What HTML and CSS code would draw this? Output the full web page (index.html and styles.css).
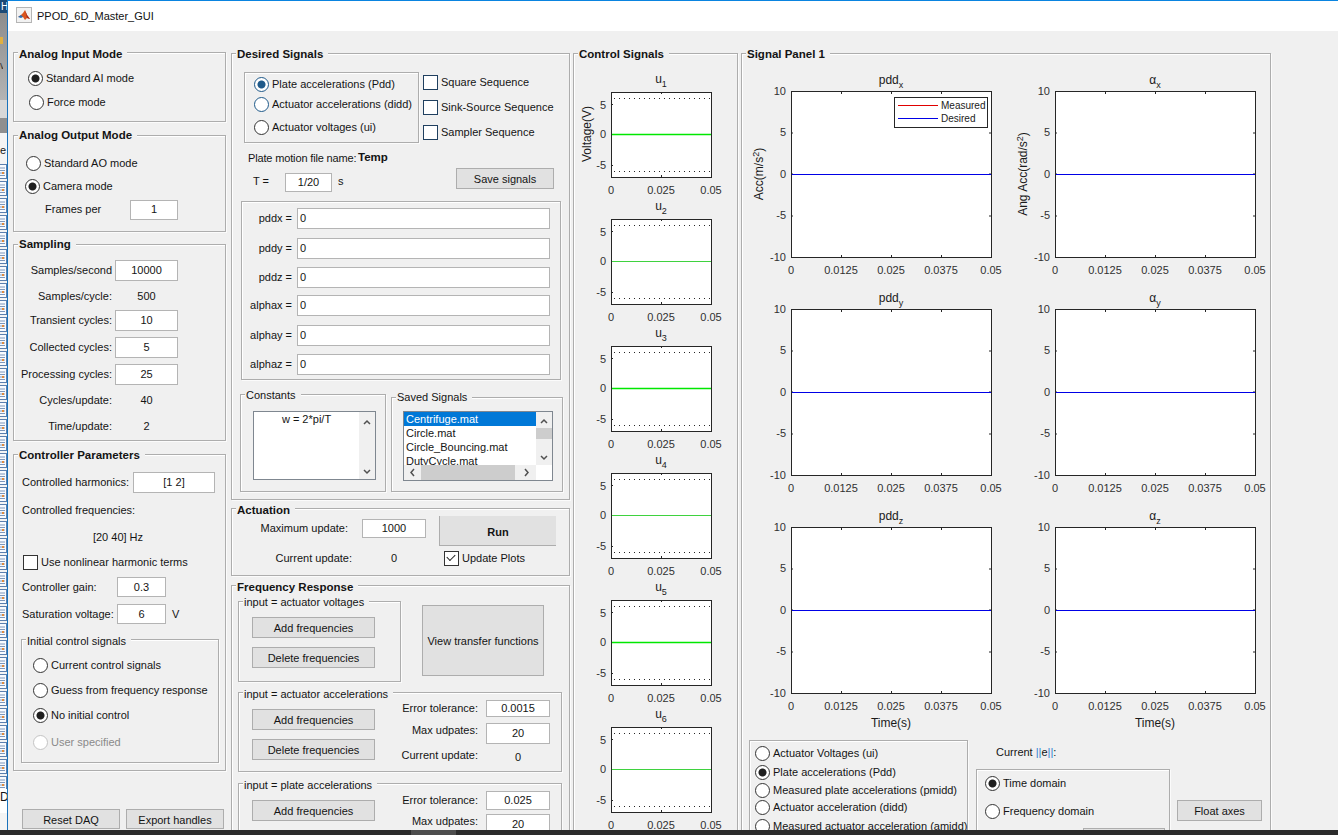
FILE: index.html
```html
<!DOCTYPE html>
<html lang="en">
<head>
<meta charset="utf-8">
<title>PPOD_6D_Master_GUI</title>
<link rel="stylesheet" href="styles.css">
</head>
<body>
<svg class="defs" width="0" height="0" aria-hidden="true">
  <defs>
    <pattern id="docs" width="8" height="17" patternUnits="userSpaceOnUse">
      <rect x="-3" y="1.500" width="9.500" height="14" fill="#f8fbff" stroke="#5b7fae"/>
      <path d="M-1 5h6M-1 7.500h6M-1 10h6M-1 12.500h6" stroke="#7d97bb"/>
      <path d="M2 9h2v2h-2z" fill="#e08a3c"/>
    </pattern>
    <g id="ctl">
      <rect x="37.500" y="23.500" width="100" height="85" fill="#fff" stroke="#262626"/>
      <path d="M87.500 23v2M87.500 108v-2M37 35.500h2M37 65.500h2M37 96.500h2" stroke="#262626"/>
      <path d="M40 29.500H136M40 102.500H136" stroke="#262626" stroke-dasharray="1 4"/>
    </g>
    <g id="sig">
      <rect x="49.500" y="22.500" width="200" height="166" fill="#fff" stroke="#262626"/>
      <path d="M99.500 23v2M149.500 23v2M199.500 23v2M99.500 188v-2M149.500 188v-2M199.500 188v-2M49 64h2M49 105h2M49 147h2M249 64h-2M249 105h-2M249 147h-2" stroke="#262626"/>
      <path d="M50 105.500H249" stroke="#0000e6"/>
    </g>
    <g id="sig-x">
      <text x="49" y="205" text-anchor="middle">0</text>
      <text x="99" y="205" text-anchor="middle">0.0125</text>
      <text x="149" y="205" text-anchor="middle">0.025</text>
      <text x="199" y="205" text-anchor="middle">0.0375</text>
      <text x="249" y="205" text-anchor="middle">0.05</text>
    </g>
    <g id="sig-y">
      <text x="44" y="26" text-anchor="end">10</text>
      <text x="44" y="67" text-anchor="end">5</text>
      <text x="44" y="109" text-anchor="end">0</text>
      <text x="44" y="150" text-anchor="end">-5</text>
      <text x="44" y="192" text-anchor="end">-10</text>
    </g>
  </defs>
</svg>

<div class="screen">
  <aside class="strip">
    <div class="strip-top">H</div>
    <div class="strip-grey"><span class="strip-folder"></span><span class="strip-v">v</span></div>
    <div class="strip-pale"><span class="strip-arrow"></span></div>
    <div class="strip-e">e</div>
    <svg class="strip-docs" width="7" height="630"><rect width="7" height="630" fill="url(#docs)"/></svg>
    <div class="strip-d">D</div>
  </aside>

  <main class="window">
    <header class="titlebar">
      <svg class="app-icon" width="16" height="16" viewBox="0 0 16 16">
        <rect x=".5" y=".5" width="15" height="15" fill="#f2f2f2" stroke="#b5b5b5"/>
        <path d="M2 10l3-2 2-2 2-3 2 5 3 4-3-1-2 2-2-3z" fill="#d9541e"/>
        <path d="M2 10l3-2 2 2-2 1z" fill="#2a6fb5"/>
        <path d="M9 3l2 5 3 4-3-1z" fill="#a8281a"/>
      </svg>
      <span class="title-text">PPOD_6D_Master_GUI</span>
    </header>

    <div class="client">
      <!-- Column 1 -->
      <section class="col col-1">
        <div class="panel p-ai">
          <h2 class="ptitle t2">Analog Input Mode</h2>
          <div class="radio on">Standard AI mode</div>
          <div class="radio nudge-r">Force mode</div>
        </div>

        <div class="panel p-ao">
          <h2 class="ptitle">Analog Output Mode</h2>
          <div class="radio">Standard AO mode</div>
          <div class="radio nudge-l on">Camera mode</div>
          <div class="frames-row"><span class="frames-label">Frames per</span><span class="input w48">1</span></div>
        </div>

        <div class="panel p-sampling">
          <h2 class="ptitle">Sampling</h2>
          <span class="lab">Samples/second</span><span class="input">10000</span>
          <span class="lab">Samples/cycle:</span><span class="val">500</span>
          <span class="lab">Transient cycles:</span><span class="input">10</span>
          <span class="lab">Collected cycles:</span><span class="input">5</span>
          <span class="lab">Processing cycles:</span><span class="input">25</span>
          <span class="lab">Cycles/update:</span><span class="val">40</span>
          <span class="lab">Time/update:</span><span class="val">2</span>
        </div>

        <div class="panel p-ctrl">
          <h2 class="ptitle t1">Controller Parameters</h2>
          <div class="ctrl-rows">
            <div class="ctrl-row"><span class="harm-label">Controlled harmonics:</span><span class="input w82">[1 2]</span></div>
            <div class="ctrl-row">Controlled frequencies:</div>
            <div class="ctrl-row ctrl-center">[20 40] Hz</div>
            <div class="ctrl-row"><span class="check">Use nonlinear harmonic terms</span></div>
            <div class="ctrl-row"><span class="gain-label">Controller gain:</span><span class="input w49">0.3</span></div>
            <div class="ctrl-row"><span class="gain-label">Saturation voltage:</span><span class="input w49">6</span><span class="unit">V</span></div>
          </div>
          <div class="panel p-init">
            <h3 class="ptitle sub t2">Initial control signals</h3>
            <div class="radio">Current control signals</div>
            <div class="radio">Guess from frequency response</div>
            <div class="radio on">No initial control</div>
            <div class="radio off">User specified</div>
          </div>
        </div>

        <div class="foot-buttons">
          <button class="btn w98">Reset DAQ</button>
          <button class="btn w98">Export handles</button>
        </div>
      </section>

      <!-- Column 2 -->
      <section class="col col-2">
        <div class="panel p-desired">
          <h2 class="ptitle t1">Desired Signals</h2>
          <div class="modes">
            <div class="panel mode-box">
              <div class="radio on blue">Plate accelerations (Pdd)</div>
              <div class="radio blue">Actuator accelerations (didd)</div>
              <div class="radio">Actuator voltages (ui)</div>
            </div>
            <div class="seq-list">
              <span class="check blue">Square Sequence</span>
              <span class="check blue">Sink-Source Sequence</span>
              <span class="check blue">Sampler Sequence</span>
            </div>
          </div>
          <div class="file-row"><span class="file-label">Plate motion file name:</span><span class="file-name">Temp</span></div>
          <div class="t-row">
            <span class="t-label">T =</span><span class="input t-input">1/20</span><span class="t-unit">s</span>
            <button class="btn save">Save signals</button>
          </div>
          <div class="panel eq-box">
            <span class="lab">pddx =</span><span class="input left">0</span>
            <span class="lab">pddy =</span><span class="input left">0</span>
            <span class="lab">pddz =</span><span class="input left">0</span>
            <span class="lab">alphax =</span><span class="input left">0</span>
            <span class="lab">alphay =</span><span class="input left">0</span>
            <span class="lab">alphaz =</span><span class="input left">0</span>
          </div>
          <div class="const-row">
            <div class="panel p-const">
              <h3 class="ptitle sub t1">Constants</h3>
              <div class="listbox const-list">
                <div class="const-text">w = 2*pi/T</div>
                <div class="vscroll">
                  <svg width="16" height="67" viewBox="0 0 16 67"><path d="M5 12l3-3 3 3M5 58l3 3 3-3" fill="none" stroke="#505050" stroke-width="1.500"/></svg>
                </div>
              </div>
            </div>
            <div class="panel p-saved">
              <h3 class="ptitle sub">Saved Signals</h3>
              <div class="listbox saved-list">
                <div class="saved-items">
                  <div class="item selected">Centrifuge.mat</div>
                  <div class="item">Circle.mat</div>
                  <div class="item">Circle_Bouncing.mat</div>
                  <div class="item">DutyCycle.mat</div>
                </div>
                <div class="vscroll saved-v">
                  <svg width="16" height="53" viewBox="0 0 16 53"><rect y="16" width="16" height="11" fill="#cdcdcd"/><path d="M5 11l3-3 3 3M5 44l3 3 3-3" fill="none" stroke="#505050" stroke-width="1.500"/></svg>
                </div>
                <div class="hscroll">
                  <svg width="132" height="15" viewBox="0 0 132 15"><rect x="17" width="94" height="15" fill="#cdcdcd"/><path d="M10 4l-3 3.500 3 3.500M121 4l3 3.500-3 3.500" fill="none" stroke="#505050" stroke-width="1.500"/></svg>
                </div>
              </div>
            </div>
          </div>
        </div>

        <div class="panel p-act">
          <h2 class="ptitle t2">Actuation</h2>
          <div class="act-row1">
            <span class="act-label">Maximum update:</span>
            <span class="input act-input">1000</span>
            <button class="btn run">Run</button>
          </div>
          <div class="act-row2">
            <span class="act-cur">Current update:</span>
            <span class="act-val">0</span>
            <span class="check checked">Update Plots</span>
          </div>
        </div>

        <div class="panel p-freq">
          <h2 class="ptitle t2">Frequency Response</h2>
          <div class="freq-top">
            <div class="panel f-volt">
              <h3 class="ptitle sub t1">input = actuator voltages</h3>
              <div class="f-buttons">
                <button class="btn wf">Add frequencies</button>
                <button class="btn wf">Delete frequencies</button>
              </div>
            </div>
            <button class="btn view">View transfer functions</button>
          </div>
          <div class="panel f-accel">
            <h3 class="ptitle sub t2">input = actuator accelerations</h3>
            <div class="f-buttons f-offset">
              <button class="btn wf">Add frequencies</button>
              <button class="btn wf">Delete frequencies</button>
            </div>
            <div class="tol-grid">
              <span class="lab tol-h17">Error tolerance:</span><span class="input tol-h17">0.0015</span>
              <span class="lab tol-up">Max udpates:</span><span class="input">20</span>
              <span class="lab tol-up">Current update:</span><span class="val tol-val">0</span>
            </div>
          </div>
          <div class="panel f-plate">
            <h3 class="ptitle sub t2">input = plate accelerations</h3>
            <div class="f-buttons f-offset">
              <button class="btn wf">Add frequencies</button>
            </div>
            <div class="tol-grid tol-plate">
              <span class="lab tol-h19">Error tolerance:</span><span class="input tol-h19">0.025</span>
              <span class="lab tol-up">Max udpates:</span><span class="input">20</span>
            </div>
          </div>
        </div>
      </section>

      <!-- Column 3 -->
      <section class="col col-3">
        <div class="panel p-control">
          <h2 class="ptitle t1">Control Signals</h2>
          <svg class="plot-c" viewBox="0 0 163 127">
            <use href="#ctl"/><path class="ctl-line bright" d="M38 65.500H137"/>
            <text class="plot-title" x="87" y="14" text-anchor="middle">u<tspan class="sub-t" dy="4">1</tspan></text>
            <text x="32" y="40" text-anchor="end">5</text><text x="32" y="69" text-anchor="end">0</text><text x="32" y="100" text-anchor="end">-5</text>
            <text x="37" y="125" text-anchor="middle">0</text><text x="87" y="125" text-anchor="middle">0.025</text><text x="137" y="125" text-anchor="middle">0.05</text>
            <text class="ylab" transform="translate(17 65) rotate(-90)" text-anchor="middle">Voltage(V)</text>
          </svg>
          <svg class="plot-c" viewBox="0 0 163 127">
            <use href="#ctl"/><path class="ctl-line" d="M38 65.500H137"/>
            <text class="plot-title" x="87" y="14" text-anchor="middle">u<tspan class="sub-t" dy="4">2</tspan></text>
            <text x="32" y="40" text-anchor="end">5</text><text x="32" y="69" text-anchor="end">0</text><text x="32" y="100" text-anchor="end">-5</text>
            <text x="37" y="125" text-anchor="middle">0</text><text x="87" y="125" text-anchor="middle">0.025</text><text x="137" y="125" text-anchor="middle">0.05</text>
          </svg>
          <svg class="plot-c" viewBox="0 0 163 127">
            <use href="#ctl"/><path class="ctl-line bright" d="M38 65.500H137"/>
            <text class="plot-title" x="87" y="14" text-anchor="middle">u<tspan class="sub-t" dy="4">3</tspan></text>
            <text x="32" y="40" text-anchor="end">5</text><text x="32" y="69" text-anchor="end">0</text><text x="32" y="100" text-anchor="end">-5</text>
            <text x="37" y="125" text-anchor="middle">0</text><text x="87" y="125" text-anchor="middle">0.025</text><text x="137" y="125" text-anchor="middle">0.05</text>
          </svg>
          <svg class="plot-c" viewBox="0 0 163 127">
            <use href="#ctl"/><path class="ctl-line" d="M38 65.500H137"/>
            <text class="plot-title" x="87" y="14" text-anchor="middle">u<tspan class="sub-t" dy="4">4</tspan></text>
            <text x="32" y="40" text-anchor="end">5</text><text x="32" y="69" text-anchor="end">0</text><text x="32" y="100" text-anchor="end">-5</text>
            <text x="37" y="125" text-anchor="middle">0</text><text x="87" y="125" text-anchor="middle">0.025</text><text x="137" y="125" text-anchor="middle">0.05</text>
          </svg>
          <svg class="plot-c" viewBox="0 0 163 127">
            <use href="#ctl"/><path class="ctl-line bright" d="M38 65.500H137"/>
            <text class="plot-title" x="87" y="14" text-anchor="middle">u<tspan class="sub-t" dy="4">5</tspan></text>
            <text x="32" y="40" text-anchor="end">5</text><text x="32" y="69" text-anchor="end">0</text><text x="32" y="100" text-anchor="end">-5</text>
            <text x="37" y="125" text-anchor="middle">0</text><text x="87" y="125" text-anchor="middle">0.025</text><text x="137" y="125" text-anchor="middle">0.05</text>
          </svg>
          <svg class="plot-c" viewBox="0 0 163 127">
            <use href="#ctl"/><path class="ctl-line" d="M38 65.500H137"/>
            <text class="plot-title" x="87" y="14" text-anchor="middle">u<tspan class="sub-t" dy="4">6</tspan></text>
            <text x="32" y="40" text-anchor="end">5</text><text x="32" y="69" text-anchor="end">0</text><text x="32" y="100" text-anchor="end">-5</text>
            <text x="37" y="125" text-anchor="middle">0</text><text x="87" y="125" text-anchor="middle">0.025</text><text x="137" y="125" text-anchor="middle">0.05</text>
          </svg>
        </div>
      </section>

      <!-- Column 4 -->
      <section class="col col-4">
        <div class="panel p-signal">
          <h2 class="ptitle t1">Signal Panel 1</h2>
          <div class="plot-grid">
            <svg class="plot-s" viewBox="0 0 264 218">
              <use href="#sig"/><use href="#sig-x"/><use href="#sig-y"/>
              <text class="plot-title" x="149" y="15" text-anchor="middle">pdd<tspan class="sub-t" dy="4">x</tspan></text>
              <text class="ylab" transform="translate(21 105) rotate(-90)" text-anchor="middle">Acc(m/s<tspan class="sup-t" dy="-4">2</tspan><tspan dy="4">)</tspan></text>
              <rect x="152.500" y="28.500" width="93" height="30" fill="#fff" stroke="#262626"/>
              <path class="leg-red" d="M156 36.500h40"/><path class="leg-blue" d="M156 49.500h40"/>
              <text class="legend" x="199" y="40">Measured</text><text class="legend" x="199" y="53">Desired</text>
            </svg>
            <svg class="plot-s" viewBox="0 0 264 218">
              <use href="#sig"/><use href="#sig-x"/><use href="#sig-y"/>
              <text class="plot-title" x="149" y="15" text-anchor="middle">&#945;<tspan class="sub-t" dy="4">x</tspan></text>
              <text class="ylab" transform="translate(21 105) rotate(-90)" text-anchor="middle">Ang Acc(rad/s<tspan class="sup-t" dy="-4">2</tspan><tspan dy="4">)</tspan></text>
            </svg>
            <svg class="plot-s" viewBox="0 0 264 218">
              <use href="#sig"/><use href="#sig-x"/><use href="#sig-y"/>
              <text class="plot-title" x="149" y="15" text-anchor="middle">pdd<tspan class="sub-t" dy="4">y</tspan></text>
            </svg>
            <svg class="plot-s" viewBox="0 0 264 218">
              <use href="#sig"/><use href="#sig-x"/><use href="#sig-y"/>
              <text class="plot-title" x="149" y="15" text-anchor="middle">&#945;<tspan class="sub-t" dy="4">y</tspan></text>
            </svg>
            <svg class="plot-s" viewBox="0 0 264 218">
              <use href="#sig"/><use href="#sig-x"/><use href="#sig-y"/>
              <text class="plot-title" x="149" y="15" text-anchor="middle">pdd<tspan class="sub-t" dy="4">z</tspan></text>
              <text class="ylab" x="149" y="222" text-anchor="middle">Time(s)</text>
            </svg>
            <svg class="plot-s" viewBox="0 0 264 218">
              <use href="#sig"/><use href="#sig-x"/><use href="#sig-y"/>
              <text class="plot-title" x="149" y="15" text-anchor="middle">&#945;<tspan class="sub-t" dy="4">z</tspan></text>
              <text class="ylab" x="149" y="222" text-anchor="middle">Time(s)</text>
            </svg>
          </div>
          <div class="sig-bottom">
            <div class="panel view-box">
              <div class="radio">Actuator Voltages (ui)</div>
              <div class="radio on">Plate accelerations (Pdd)</div>
              <div class="radio">Measured plate accelerations (pmidd)</div>
              <div class="radio">Actuator acceleration (didd)</div>
              <div class="radio">Measured actuator acceleration (amidd)</div>
            </div>
            <div class="domain-col">
              <div class="current-e">Current <span class="bars">||</span>e<span class="bars">||</span>:</div>
              <div class="panel domain-box">
                <div class="radio on">Time domain</div>
                <div class="radio">Frequency domain</div>
                <div class="btn domain-btn"></div>
              </div>
            </div>
            <button class="btn float">Float axes</button>
          </div>
        </div>
      </section>
    </div>
  </main>
</div>
<footer class="taskbar"><span class="task-active"></span></footer>
</body>
</html>
```

FILE: styles.css
```css
* { box-sizing: border-box; }
html, body { margin: 0; padding: 0; }
body {
  width: 1338px;
  height: 835px;
  overflow: hidden;
  background: #f0f0f0;
  color: #141414;
  font: 11px/1 "Liberation Sans", Arial, sans-serif;
  white-space: nowrap;
}
.defs { position: absolute; }

.screen { display: flex; height: 830px; overflow: hidden; }

/* left desktop strip */
.strip { width: 7px; flex: none; background: #f4f4f4; overflow: hidden; display: flex; flex-direction: column; }
.strip-top { height: 13px; background: #1c4a76; color: #fff; font-size: 10px; padding: 2px 0 0 1px; line-height: 10px; }
.strip-grey { height: 87px; background: linear-gradient(#8c8c8c, #b4b4b4); display: flex; flex-direction: column; }
.strip-folder { width: 3px; height: 7px; background: #e0b040; margin-top: 24px; }
.strip-v { color: #333; margin-top: 17px; font-size: 10px; width: 3px; overflow: hidden; }
.strip-pale { height: 33px; background: #d8d8d8; }
.strip-arrow { display: block; width: 7px; height: 15px; margin-top: 18px; background: #8f8f8f; }
.strip-e { height: 30px; background: #f4f4f4; font-size: 11px; line-height: 34px; }
.strip-docs { display: block; flex: none; }
.strip-d { font-size: 12px; line-height: 16px; margin-top: -4px; background: #fff; height: 24px; }

/* window */
.window { flex: 1; min-width: 0; border-left: 1px solid #1a72bb; border-top: 1px solid #0a84e0; display: flex; flex-direction: column; }
.titlebar { height: 30px; flex: none; background: #fff; display: flex; align-items: center; padding-left: 8px; }
.app-icon { flex: none; margin-top: -2px; }
.title-text { margin-left: 5px; font-size: 11px; color: #111; }

.client { flex: 1; min-height: 0; display: flex; padding: 22px 0 0 5px; overflow: hidden; }
.col { flex: none; display: flex; flex-direction: column; }
.col-1 { width: 213px; margin: -1px 5px 0 0; }
.col-2 { width: 339px; margin-right: 3px; }
.col-3 { width: 165px; margin-right: 3px; }
.col-4 { width: 530px; }

/* panels */
.panel {
  position: relative;
  flex: none;
  border: 1px solid #adadad;
  box-shadow: inset 1px 1px 0 #fff, 1px 1px 0 #fbfbfb;
}
.ptitle {
  position: absolute;
  top: -7px;
  left: 4px;
  margin: 0;
  padding: 0 5px 0 1px;
  background: #f0f0f0;
  font-size: 11.500px;
  font-weight: 700;
  line-height: 13px;
}
.ptitle.t1 { top: -6px; }
.ptitle.t2 { top: -5px; }
.ptitle.sub { font-weight: 400; font-size: 11px; }

/* generic controls */
.radio { display: flex; align-items: center; gap: 3px; }
.radio::before {
  content: "";
  flex: none;
  width: 13px;
  height: 13px;
  border: 1px solid #333;
  border-radius: 50%;
  background: #fff;
}
.radio.on::before { background: radial-gradient(circle, #1f1f1f 0 3.500px, #fff 4.500px); }
.radio.blue::before { border-color: #1f5a8a; }
.radio.on.blue::before { background: radial-gradient(circle, #1f5a8a 0 3.500px, #fff 4.500px); }
.radio.off { color: #8a8a8a; }
.radio.off::before { border-color: #c4c4c4; }
.nudge-l { margin-left: -1px; }
.nudge-r { margin-left: 1px; }

.check { display: flex; align-items: center; gap: 3px; }
.check::before {
  content: "";
  flex: none;
  width: 13px;
  height: 13px;
  border: 1px solid #333;
  background: #fff;
}
.check.blue::before { border-color: #1f3f5f; }
.check.checked { position: relative; }
.check.checked::after {
  content: "";
  position: absolute;
  left: 3px;
  top: 50%;
  width: 7px;
  height: 4px;
  margin-top: -4px;
  border-left: 1.500px solid #222;
  border-bottom: 1.500px solid #222;
  transform: rotate(-45deg);
}

.input {
  display: flex;
  align-items: center;
  justify-content: center;
  background: #fff;
  border: 1px solid #b4b4b4;
  height: 21px;
}
.input.left { justify-content: flex-start; padding-left: 2px; }
.lab { text-align: right; line-height: 21px; }
.val { text-align: center; line-height: 21px; }
.w48 { width: 48px; height: 20px; }
.w49 { width: 49px; height: 20px; }
.w82 { width: 82px; }
.btn {
  display: block;
  margin: 0;
  padding: 2px 0 0;
  background: #e1e1e1;
  border: 1px solid #adadad;
  font: inherit;
  color: #141414;
}
.w98 { width: 98px; height: 20px; }
.wf { width: 123px; height: 21px; }

/* column 1 */
.p-ai { height: 70px; padding: 13px 0 0 14px; display: grid; grid-template-rows: 24px 24px; }
.p-ao { height: 97px; margin-top: 13px; padding: 16px 0 0 12px; display: grid; grid-template-rows: 23px 23px 23px; }
.frames-row { display: flex; align-items: center; }
.frames-label { width: 104px; padding-left: 19px; }

.p-sampling {
  height: 197px;
  margin-top: 12px;
  padding-top: 15px;
  display: grid;
  grid-template-columns: 98px 63px;
  column-gap: 3px;
  grid-template-rows: 26px 24px 27px 27px 26px 26px 21px;
  align-items: start;
}
.p-ctrl { height: 317px; margin-top: 13px; padding-top: 17px; }
.ctrl-rows {
  padding-left: 8px;
  height: 167px;
  display: grid;
  grid-template-rows: 28px 27px 25px 25px 27px 20px;
}
.ctrl-row { display: flex; align-items: flex-start; line-height: 21px; }
.ctrl-center { width: 192px; justify-content: center; }
.ctrl-row .check { height: 21px; margin-left: 1px; }
.harm-label { width: 111px; }
.gain-label { width: 95px; }
.unit { margin-left: 6px; }
.p-init {
  margin-left: 7px;
  width: 198px;
  height: 124px;
  padding: 13px 0 0 11px;
  display: grid;
  grid-template-rows: 25px 25px 27px 25px;
  align-items: start;
}
.p-init .radio { height: 25px; }
.foot-buttons { display: flex; gap: 6px; margin: 38px 0 0 9px; }

/* column 2 */
.p-desired { height: 447px; padding-top: 18px; }
.modes { display: flex; padding-left: 12px; }
.mode-box {
  width: 175px;
  height: 71px;
  padding: 1px 0 0 9px;
  display: grid;
  grid-template-rows: 20px 23px 20px;
  align-items: start;
}
.mode-box .radio { height: 20px; }
.seq-list { margin-left: 4px; display: flex; flex-direction: column; gap: 5px; }
.seq-list .check { height: 20px; }
.file-row { height: 20px; margin-top: 5px; padding-left: 16px; display: flex; align-items: center; }
.file-label { width: 110px; letter-spacing: -.15px; }
.file-name { font-weight: 700; font-size: 11.500px; }
.t-row { height: 25px; padding: 0 15px 0 21px; display: flex; align-items: flex-start; }
.t-label, .t-unit, .t-input { margin-top: 5px; height: 19px; line-height: 17px; }
.t-label { width: 32px; }
.t-input { width: 47px; }
.t-unit { margin-left: 6px; }
.save { margin-left: auto; width: 98px; height: 21px; }
.eq-box {
  margin: 8px 0 0 9px;
  width: 320px;
  height: 179px;
  padding-top: 6px;
  display: grid;
  grid-template-columns: 50px 253px;
  column-gap: 5px;
  grid-template-rows: 30px 29px 28px 30px 29px 21px;
  align-items: start;
}
.const-row { display: flex; align-items: flex-start; gap: 5px; margin: 14px 0 0 8px; }
.p-const { width: 146px; height: 98px; padding: 16px 0 0 12px; }
.p-saved { width: 172px; height: 95px; margin-top: 3px; padding: 13px 0 0 11px; }
.listbox { border: 1px solid #7f8790; background: #fff; }
.const-list { width: 123px; height: 69px; display: flex; }
.const-text { flex: 1; text-align: center; padding-top: 1px; line-height: 13px; }
.vscroll { background: #f0f0f0; flex: none; }
.vscroll svg, .hscroll svg { display: block; }
.saved-list {
  width: 150px;
  height: 70px;
  display: grid;
  grid-template-columns: 132px 16px;
  grid-template-rows: 53px 15px;
}
.saved-items { overflow: hidden; grid-column: 1; grid-row: 1; }
.item { height: 14px; line-height: 14px; padding-left: 2px; }
.item.selected { background: #0078d7; color: #fff; }
.saved-v { grid-column: 2; grid-row: 1; }
.hscroll { background: #f0f0f0; grid-column: 1; grid-row: 2; }

.p-act { height: 68px; margin-top: 8px; padding-top: 7px; }
.act-row1 { display: flex; height: 32px; align-items: flex-start; }
.act-label { width: 116px; margin-top: 3px; text-align: right; line-height: 19px; }
.act-input { width: 64px; height: 19px; margin: 3px 0 0 14px; }
.run {
  width: 117px;
  height: 30px;
  margin-left: 13px;
  padding-top: 4px;
  border-width: 0 0 1px 1px;
  font-weight: 700;
}
.act-row2 { display: flex; height: 20px; align-items: center; }
.act-cur { width: 120px; text-align: right; }
.act-val { width: 84px; text-align: center; }
.act-row2 .check { margin-left: 8px; }

.p-freq { height: 300px; margin-top: 9px; padding-top: 15px; }
.freq-top { display: flex; align-items: flex-start; margin-left: 6px; }
.f-volt { width: 163px; height: 81px; padding: 15px 0 0 13px; }
.f-buttons { display: flex; flex-direction: column; gap: 9px; flex: none; }
.view { width: 122px; height: 71px; margin: 4px 0 0 21px; }
.f-accel, .f-plate {
  width: 324px;
  height: 80px;
  margin-left: 6px;
  padding: 7px 0 0 13px;
  display: flex;
  align-items: flex-start;
}
.f-accel { margin-top: 10px; }
.f-plate { margin-top: 11px; }
.f-offset { margin-top: 9px; }
.tol-grid {
  display: grid;
  grid-template-columns: 103px 64px;
  column-gap: 8px;
  grid-template-rows: 23px 25px 20px;
  align-items: start;
}
.tol-plate { grid-template-rows: 23px 25px; }
.tol-h17 { height: 17px; line-height: 17px; }
.tol-h19 { height: 19px; line-height: 19px; }
.tol-up { line-height: 14px; }
.tol-val { line-height: 18px; }

/* plots */
svg text {
  font-family: "Liberation Sans", Arial, sans-serif;
  font-size: 11px;
  fill: #303030;
}
svg .plot-title { font-size: 12px; fill: #1a1a1a; }
svg .ylab { font-size: 12px; fill: #1a1a1a; }
svg .legend { font-size: 10px; fill: #222; }
svg .sub-t, svg .sup-t { font-size: 9px; }
.ctl-line { stroke: #3fd23f; fill: none; }
.ctl-line.bright { stroke: #00e800; stroke-width: 1.500; }
.leg-red { stroke: #e00000; fill: none; }
.leg-blue { stroke: #0000e6; fill: none; }

.p-control { height: 800px; padding-top: 15px; }
.plot-c { display: block; width: 163px; height: 127px; overflow: visible; }
.p-signal { height: 800px; padding-top: 15px; }
.plot-grid { display: grid; grid-template-columns: 264px 264px; grid-auto-rows: 218px; }
.plot-s { display: block; width: 264px; height: 218px; overflow: visible; }

.sig-bottom { display: flex; align-items: flex-start; margin: 17px 0 0 7px; }
.view-box {
  width: 219px;
  height: 120px;
  padding: 3px 0 0 5px;
  display: grid;
  grid-template-rows: 19px 18px 17px 19px 18px;
  align-items: start;
}
.view-box .radio { height: 18px; }
.domain-col { width: 194px; margin-left: 8px; }
.current-e { height: 24px; padding-left: 20px; line-height: 24px; }
.bars { color: #2f7fd0; }
.domain-box { margin-top: 5px; height: 100px; padding: 4px 0 0 8px; }
.domain-box .radio { height: 18px; }
.domain-box .radio + .radio { margin-top: 10px; }
.domain-btn { width: 82px; height: 20px; margin: 8px 0 0 98px; }
.float { width: 85px; height: 21px; margin: 60px 0 0 7px; }

.taskbar { height: 5px; background: #2b2b2b; }
.task-active { display: block; width: 45px; height: 5px; margin-left: 411px; background: #4d4d4d; }
```
